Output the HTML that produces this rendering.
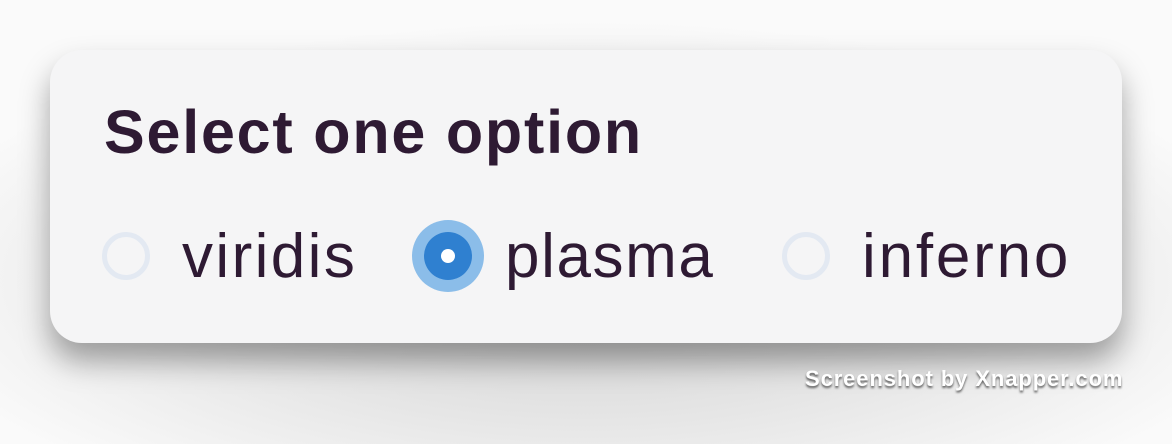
<!DOCTYPE html>
<html><head><style>
html,body{margin:0;padding:0}
body{width:1172px;height:444px;background:#fff;position:relative;overflow:hidden;font-family:"Liberation Sans",sans-serif}
.bg{position:absolute;inset:0;background:radial-gradient(ellipse 700px 260px at 586px 280px,#cfcfcf 0%,#e6e6e6 55%,#fafafa 100%)}
.card{position:absolute;left:50px;top:50px;width:1072px;height:293px;border-radius:32px;background:#f5f5f6;box-shadow:0 18px 30px rgba(0,0,0,0.35)}
.t{position:absolute;color:#2e1a33;white-space:nowrap}
.title{left:104px;top:97px;font-size:61px;font-weight:bold;letter-spacing:1.8px}
.opt{top:221px;font-size:62px;letter-spacing:2.4px}
.r{position:absolute;border-radius:50%;box-sizing:border-box}
.off{width:48px;height:48px;border:5px solid #e3e9f2}
.wm{position:absolute;left:805px;top:366px;font-size:22px;letter-spacing:0.9px;color:#fff;font-weight:bold;text-shadow:0 2px 2px rgba(0,0,0,0.6)}
</style></head><body>
<div class="bg"></div>
<div class="card"></div>
<div class="t title">Select one option</div>
<div class="r off" style="left:102px;top:232px"></div>
<div class="t opt" style="left:182px">viridis</div>
<div class="r" style="left:412px;top:220px;width:72px;height:72px;background:#8bbde9"></div>
<div class="r" style="left:424px;top:232px;width:48px;height:48px;background:#2f80d0"></div>
<div class="r" style="left:441px;top:249px;width:14px;height:14px;background:#fff"></div>
<div class="t opt" style="left:505px;letter-spacing:1.6px">plasma</div>
<div class="r off" style="left:782px;top:232px"></div>
<div class="t opt" style="left:862px;letter-spacing:2.8px">inferno</div>
<div class="wm">Screenshot by Xnapper.com</div>
</body></html>
